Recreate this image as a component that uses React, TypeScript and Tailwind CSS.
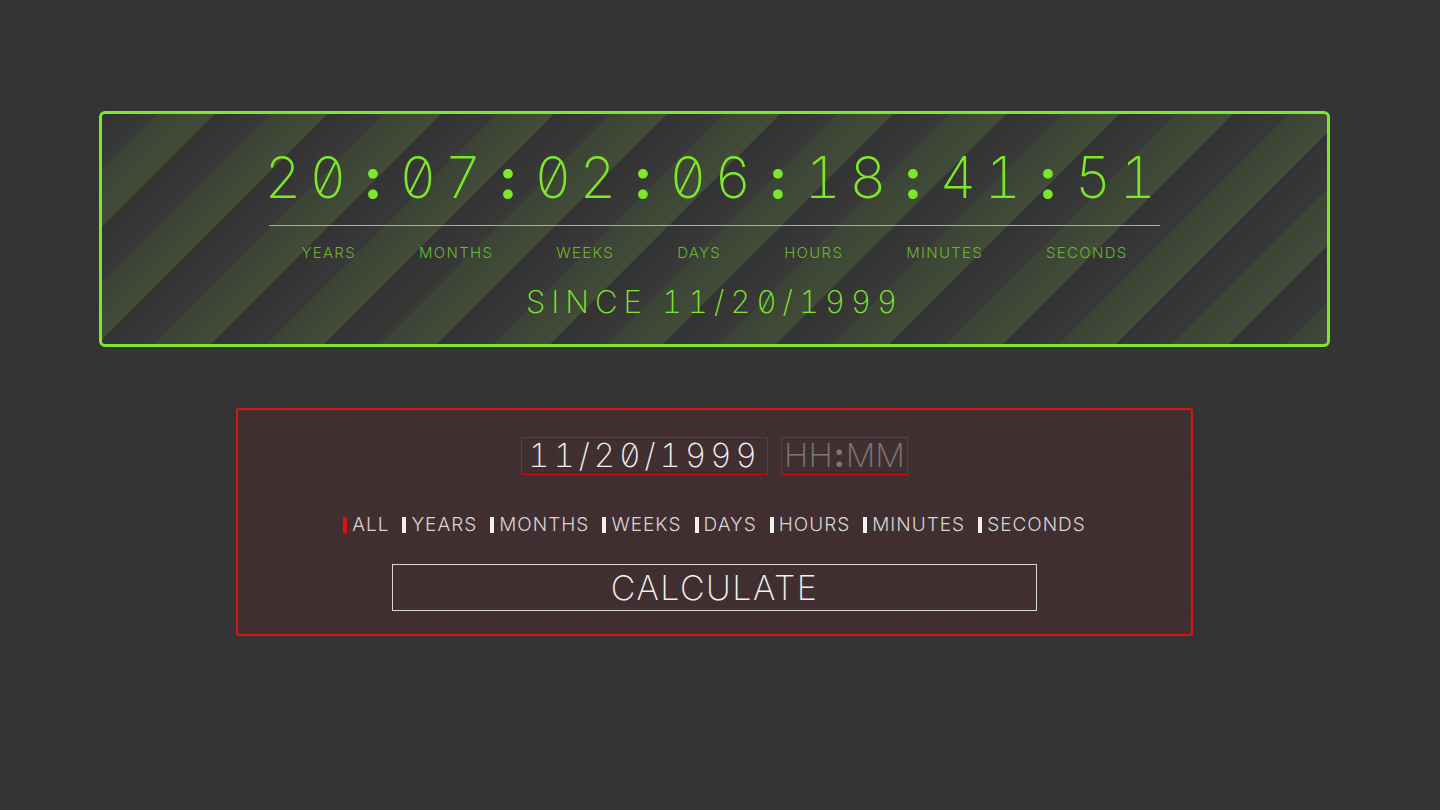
const units = ['YEARS', 'MONTHS', 'WEEKS', 'DAYS', 'HOURS', 'MINUTES', 'SECONDS'];
const clock = '20:07:02:06:18:41:51';

// thin tabular face with slashed zeros
const mono = "font-['Inter','DejaVu_Sans',sans-serif] [font-feature-settings:'tnum','zero']";

function Counter() {
  return (
    <div className="w-[1231px] h-[236px] rounded-[6px] border-[3px] border-[#7de82b] flex flex-col items-center pt-[34px] bg-[repeating-linear-gradient(135deg,#333333_0px,#393939_39px,#3b4435_40px,#424c39_79px,#333333_80px)]">
      <div className={`flex items-center text-[#7de82b] text-[57px] leading-[60px] font-extralight pr-[8px] ${mono}`}>
        {clock.split('').map((c, i) => (
          <span key={i} className={`w-[45px] text-center ${c === ':' ? 'font-bold' : ''}`}>
            {c}
          </span>
        ))}
      </div>
      <div className="w-[891px] h-px bg-[#8ccf4c] mt-[17px]" />
      <div className={`flex gap-[63px] mt-[18px] text-[15px] leading-[18px] text-[#69b82c] font-light tracking-[1.3px] ${mono}`}>
        {units.map((u) => (
          <span key={u}>{u}</span>
        ))}
      </div>
      <div className={`mt-[22px] text-[31px] leading-[36px] text-[#7de82b] font-extralight tracking-[6px] ${mono}`}>
        SINCE 11/20/1999
      </div>
    </div>
  );
}

function Option({ label, active }: { label: string; active?: boolean }) {
  return (
    <label className="flex items-center gap-[5px]">
      <span className={`w-[4px] h-[16px] ${active ? 'bg-[#e01010]' : 'bg-[#f2f2f2]'}`} />
      <span>{label}</span>
    </label>
  );
}

function Calculator() {
  return (
    <div className="w-[957px] h-[228px] rounded-[3px] border-2 border-[#e01212] flex flex-col items-center pt-[27px] bg-[repeating-linear-gradient(135deg,#3b3132_0px,#3b3132_3px,#4b2b2e_4px,#4b2b2e_5px,#3b3132_6px)]">
      <div className="flex gap-[13px]">
        <div className={`h-[38px] w-[247px] border border-[#c81010] flex items-center justify-center text-[33px] text-[#f0f0f0] font-extralight tracking-[4px] ${mono}`}>
          11/20/1999
        </div>
        <div className={`h-[38px] w-[127px] border border-[#c81010] flex items-center justify-center text-[33px] text-[#7a7a7a] font-extralight ${mono}`}>
          HH<span className="font-bold mx-[2px]">:</span>MM
        </div>
      </div>
      <div className={`flex gap-[13px] mt-[38px] text-[19px] leading-[24px] text-[#d6d6d6] font-light tracking-[1px] ${mono}`}>
        <Option label="ALL" active />
        {units.map((u) => (
          <Option key={u} label={u} />
        ))}
      </div>
      <button className={`mt-[27px] w-[645px] h-[47px] border border-[#d8d8d8] text-[34px] text-[#f0f0f0] font-extralight tracking-[1.5px] flex items-center justify-center ${mono}`}>
        CALCULATE
      </button>
    </div>
  );
}

export default function App() {
  return (
    <div className="min-h-[810px] bg-[#343434]">
      <div className="w-[1429px] flex flex-col items-center pt-[111px] gap-[61px]">
        <Counter />
        <Calculator />
      </div>
    </div>
  );
}
